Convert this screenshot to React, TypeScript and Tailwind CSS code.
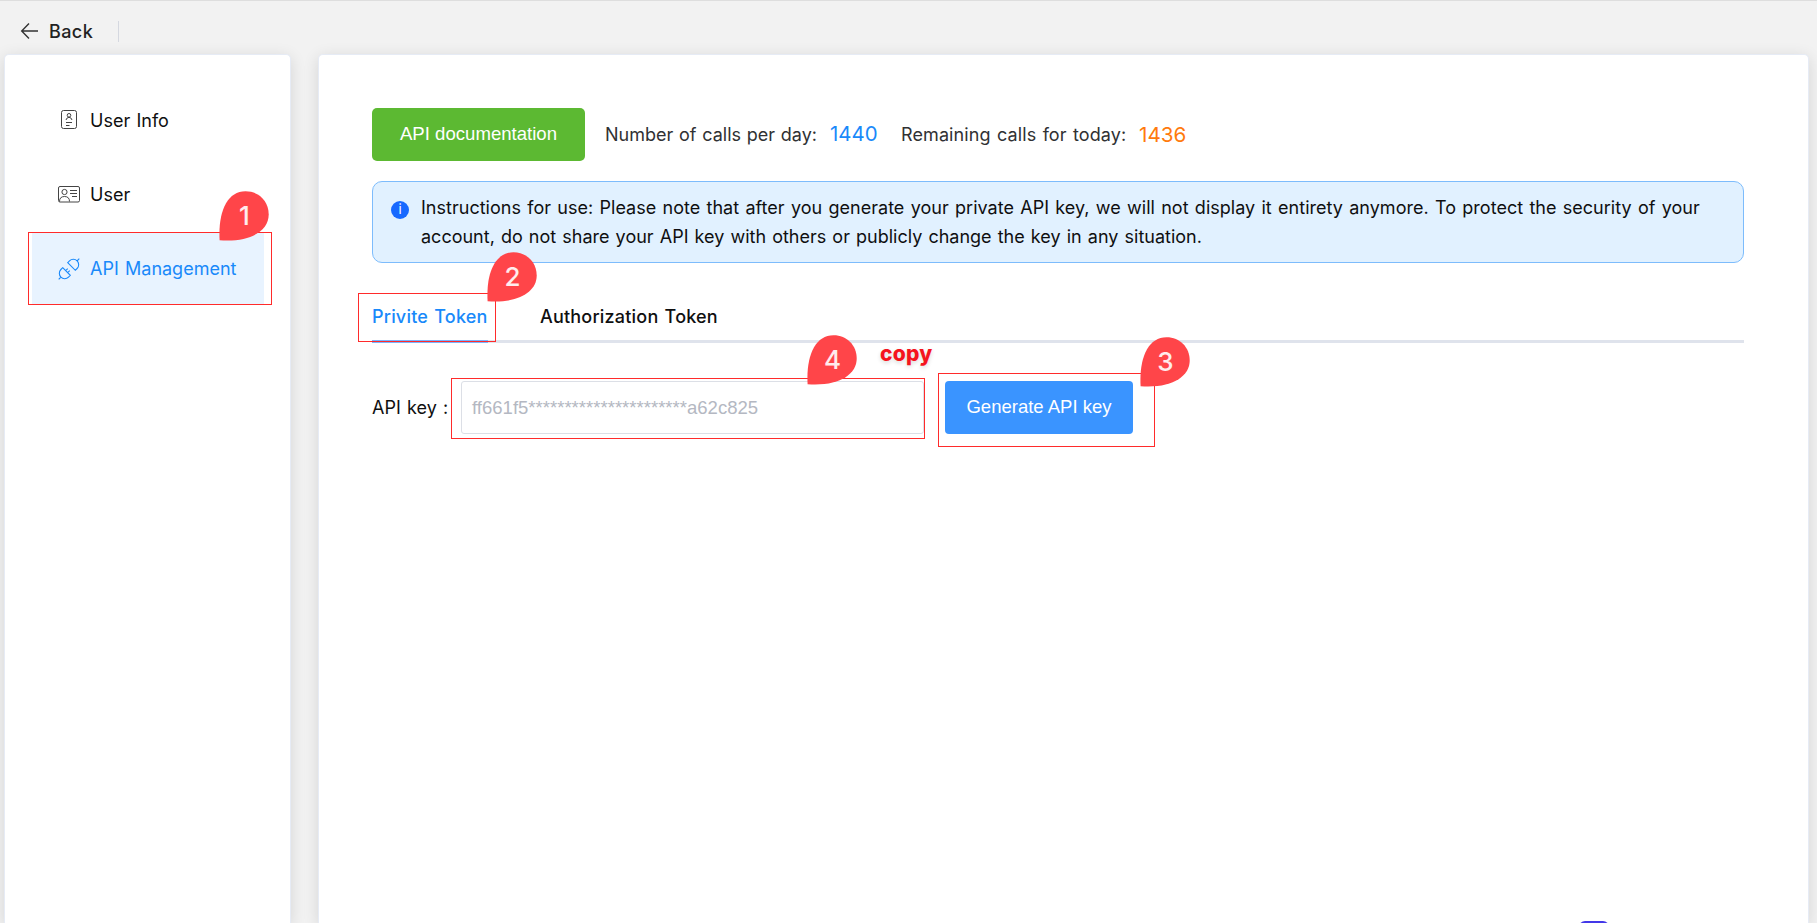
import React from "react";

function Pin({ n, className }: { n: number; className: string }) {
  return (
    <div className={`absolute h-[50px] w-[50px] ${className}`}>
      <svg viewBox="0 0 50 50" className="absolute inset-0 h-full w-full">
        <path d="M.6 49.200C-1 21 8 .3 26.500 .3C40 .3 49.700 10.500 49.700 23.500C49.700 40 31 51.500 .6 49.200Z" fill="#ff4549" />
      </svg>
      <span className="absolute inset-0 flex items-center justify-center pb-[2px] pl-px text-[26px] font-medium text-white/90">{n}</span>
    </div>
  );
}

export default function App() {
  return (
    <div className="relative flex h-[923px] w-[1817px] flex-col overflow-hidden border-t border-[#dedede] bg-[#f2f2f2] font-['Inter','Liberation_Sans',sans-serif] text-[18px] text-[#0f0f10] [word-spacing:1.2px]">
      <header className="flex h-[53px] shrink-0 items-center pt-[7px] pl-5 text-[#222]">
        <svg width="19" height="18" viewBox="0 0 19 18" fill="none" stroke="#333" strokeWidth="1.4">
          <path d="M18 9H2M9 1.500L1.700 9L9 16.500" />
        </svg>
        <span className="ml-[10px] font-medium tracking-[0.4px]">Back</span>
        <span className="ml-[25px] h-[21px] w-px bg-[#d5d8e0]" />
      </header>
      <div className="flex flex-1 gap-[27px] pl-1">
        <aside className="flex w-[287px] flex-col rounded-t-[5px] border border-b-0 border-[#e6ebf5] bg-white pt-[28px] pr-[26px] pl-[27px] shadow-[0_3px_16px_rgba(0,0,0,0.12)]">
          <div className="flex h-[74.500px] items-center pl-[26px]">
            <svg width="22" height="22" viewBox="0 0 22 22" fill="none" stroke="#444" strokeWidth="1">
              <rect x="3.500" y="1.500" width="15" height="18" rx="2" />
              <circle cx="11" cy="6.300" r="1.800" />
              <path d="M8 11Q8.500 8.500 11 8.300Q13.500 8.500 14 11M8 13.500H14M8 16.500H11.500" />
            </svg>
            <span className="ml-[10px]">User Info</span>
          </div>
          <div className="flex h-[74.500px] items-center pl-[26px]">
            <svg width="22" height="22" viewBox="0 0 22 22" fill="none" stroke="#444" strokeWidth="1">
              <rect x=".5" y="2.500" width="21" height="15.500" rx="1.500" />
              <circle cx="6.500" cy="8" r="2.600" />
              <path d="M1.500 17.500Q1.500 12.500 6.500 12.500Q11.500 12.500 11.500 17.500M12 6.500H19M12 9.500H19M14 12.500H19" />
            </svg>
            <span className="ml-[10px]">User</span>
          </div>
          <div className="flex h-[72px] items-center bg-[#e8f3ff] pt-px pl-[26px] text-[#1989fa]">
            <svg width="22" height="22" viewBox="0 0 22 22" fill="none" stroke="#1989fa" strokeWidth="1.100">
              <path d="M.7 21.300L3 19M4.700 9.700L12.300 17.300L10.500 19.100C8.300 21.300 4.900 21.100 2.900 19.100C.9 17.100 .7 13.700 2.900 11.500ZM7.700 12.700L9.700 10.700M9.700 14.700L11.700 12.700M9.700 4.700L17.300 12.300L19.100 10.500C21.300 8.300 21.100 4.900 19.100 2.900C17.100 .9 13.700 .7 11.500 2.900ZM19 3L21.300 .7" />
            </svg>
            <span className="ml-[10px]">API Management</span>
          </div>
        </aside>
        <main className="w-[1491px] rounded-t-[5px] border border-b-0 border-[#e6ebf5] bg-white pt-[53px] pl-[53px] shadow-[0_3px_16px_rgba(0,0,0,0.12)]">
          <div className="flex h-[53px] items-center">
            <button className="h-[53px] w-[213px] rounded-[5px] bg-[#5cb932] pb-px font-['Liberation_Sans'] text-[18.600px] text-white [word-spacing:0]">API documentation</button>
            <span className="ml-[20px] w-[213px] whitespace-nowrap text-[#303133] [word-spacing:0.7px]">Number of calls per day:</span>
            <span className="ml-[12px] w-[48px] text-[20.400px] text-[#1989fa]">1440</span>
            <span className="ml-[23px] w-[226px] whitespace-nowrap tracking-[0.100px] text-[#303133]">Remaining calls for today:</span>
            <span className="ml-[12px] text-[20.700px] text-[#ff7a0d]">1436</span>
          </div>
          <div className="mt-[20px] flex h-[82px] w-[1372px] rounded-[10px] border border-[#7dbcfc] bg-[#e1f1ff] pt-[11px] pl-[18px]">
            <span className="mt-[8px] flex h-[18px] w-[18px] items-center justify-center rounded-full bg-[#1769ff] text-[13px] text-white">i</span>
            <p className="ml-[12px] leading-[29px] whitespace-nowrap">
              <span className="tracking-[0.020px]">Instructions for use: Please note that after you generate your private API key, we will not display it entirety anymore. To protect the security of your</span><br />
              <span className="[word-spacing:1.050px]">account, do not share your API key with others or publicly change the key in any situation.</span>
            </p>
          </div>
          <div className="mt-[30px] flex h-[50px] w-[1372px] gap-[52px] border-b-[3px] border-[#dfe3ec] font-medium tracking-[0.200px]">
            <span className="-mb-[3px] w-[116px] border-b-[3px] border-[#79b4ff] pt-[10px] whitespace-nowrap text-[#1989fa]">Privite Token</span>
            <span className="pt-[10px]">Authorization Token</span>
          </div>
          <div className="mt-[38px] flex items-center">
            <span className="w-[89px]">API key :</span>
            <div className="flex h-[53px] w-[463px] items-center rounded-[3px] border border-[#dcdfe6] pl-[10px] font-['Liberation_Sans'] text-[18.550px] text-[#b4b8c2]">ff661f5**********************a62c825</div>
            <button className="ml-[21px] h-[53px] w-[188px] rounded-[4px] bg-[#3a94ff] pb-px font-['Liberation_Sans'] text-[18.500px] text-white [word-spacing:0]">Generate API key</button>
          </div>
        </main>
      </div>
      <div className="absolute top-[231px] left-[28px] h-[73px] w-[244px] border border-[#ff2b2b]" />
      <div className="absolute top-[292px] left-[358px] h-[49px] w-[138px] border border-[#ff2b2b]" />
      <div className="absolute top-[377px] left-[451px] h-[61px] w-[474px] border border-[#ff2b2b]" />
      <div className="absolute top-[372px] left-[938px] h-[74px] w-[217px] border border-[#ff2b2b]" />
      <Pin n={1} className="top-[190px] left-[219px]" />
      <Pin n={2} className="top-[251px] left-[487px]" />
      <Pin n={3} className="top-[336px] left-[1140px]" />
      <Pin n={4} className="top-[334px] left-[807px]" />
      <span className="absolute top-[337px] left-[880px] text-[21px] font-extrabold tracking-[0.200px] text-[#f5141e] [text-shadow:0_2px_4px_rgba(0,0,0,0.15)]">copy</span>
      <div className="absolute top-[920px] left-[1579px] h-[20px] w-[30px] rounded-[6px] bg-[#4338e8]" />
    </div>
  );
}
